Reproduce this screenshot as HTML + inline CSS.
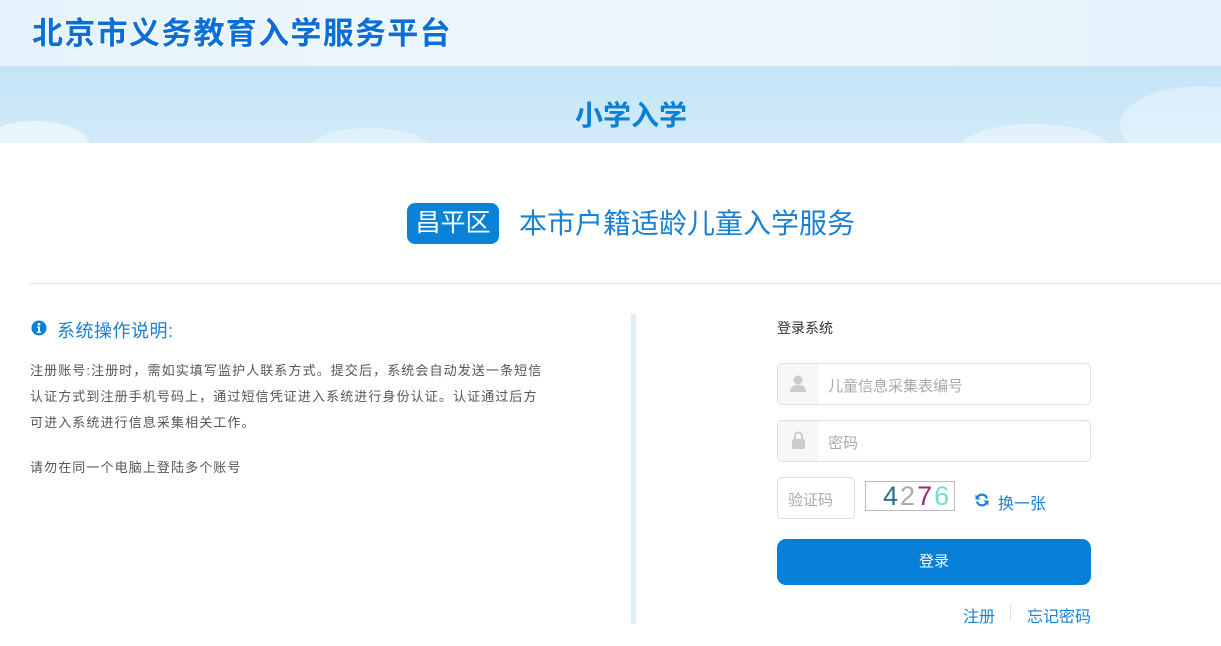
<!DOCTYPE html>
<html><head><meta charset="utf-8">
<style>
*{margin:0;padding:0;box-sizing:border-box}
body{width:1221px;height:646px;overflow:hidden;background:#fff;font-family:"Liberation Sans","Noto Sans CJK SC",sans-serif;position:relative}
.a{position:absolute;white-space:nowrap}
.top{left:0;top:0;width:1221px;height:66px;background:linear-gradient(90deg,#e6f3fc,#eef7fd 60%,#e4f2fc)}
.band{left:0;top:66px;width:1221px;height:77px;background:linear-gradient(180deg,#c4e4f7,#d2ebf9);overflow:hidden}
.cloud{position:absolute;background:#eef7fd;border-radius:50%;opacity:.8}
.logo{left:32px;top:8px;font-size:31px;font-weight:bold;color:#0a6fd6;letter-spacing:1.3px;text-shadow:0 0 2px #fff,1px 1px 0 #fff,-1px -1px 0 #fff,1px -1px 0 #fff,-1px 1px 0 #fff}
.inp{position:absolute;border:1px solid #ddd;border-radius:5px;background:#fff;overflow:hidden}
.ic{position:absolute;left:0;top:0;width:40px;height:100%;background:#f7f7f7}
.ph{position:absolute;font-size:15px;color:#aaa}
</style></head><body>
<div class="a top"></div>
<div class="a band">
<div class="cloud" style="left:-20px;top:55px;width:110px;height:50px"></div>
<div class="cloud" style="left:310px;top:62px;width:120px;height:40px;opacity:.5"></div>
<div class="cloud" style="left:960px;top:58px;width:150px;height:50px;opacity:.6"></div>
<div class="cloud" style="left:1120px;top:20px;width:160px;height:80px;opacity:.5"></div>
</div>
<div class="a logo">北京市义务教育入学服务平台</div>
<div class="a" style="left:575px;top:94px;font-size:28px;font-weight:bold;color:#0a7fd8">小学入学</div>

<div class="a" style="left:407px;top:203px;width:92px;height:41px;background:#0a82d8;border-radius:8px;color:#fff;font-size:25px;text-align:center;line-height:41px">昌平区</div>
<div class="a" style="left:519px;top:205px;font-size:28px;color:#1a80d4;line-height:38px">本市户籍适龄儿童入学服务</div>
<div class="a" style="left:30px;top:283px;width:1191px;height:1px;background:#ddd"></div>

<svg class="a" style="left:31px;top:320px" width="16" height="16" viewBox="0 0 16 16"><circle cx="8" cy="8" r="7.5" fill="#0a7fd8"/><circle cx="8" cy="4.3" r="1.4" fill="#fff"/><path d="M6 6.6h3v5h1.2v1.3H5.8v-1.3H7v-3.7H6z" fill="#fff"/></svg>
<div class="a" style="left:57px;top:317px;font-size:18px;color:#1a80d4;letter-spacing:0.5px">系统操作说明:</div>
<div class="a" style="left:30px;top:358px;font-size:13px;color:#555;line-height:26px;letter-spacing:1.1px">注册账号:注册时，需如实填写监护人联系方式。提交后，系统会自动发送一条短信<br>认证方式到注册手机号码上，通过短信凭证进入系统进行身份认证。认证通过后方<br>可进入系统进行信息采集相关工作。</div>
<div class="a" style="left:30px;top:457px;font-size:13px;color:#555;letter-spacing:1.1px">请勿在同一个电脑上登陆多个账号</div>
<div class="a" style="left:631px;top:314px;width:5px;height:310px;background:#e2eef8"></div>

<div class="a" style="left:777px;top:318px;font-size:14px;color:#333">登录系统</div>
<div class="inp" style="left:777px;top:363px;width:314px;height:42px"><div class="ic"><svg style="position:absolute;left:12px;top:11px" width="16" height="18" viewBox="0 0 16 18"><circle cx="8" cy="5" r="4.5" fill="#ccc"/><path d="M0 17c0-5 3-7 8-7s8 2 8 7z" fill="#ccc"/></svg></div><div class="ph" style="left:50px;top:11px">儿童信息采集表编号</div></div>
<div class="inp" style="left:777px;top:420px;width:314px;height:42px"><div class="ic"><svg style="position:absolute;left:14px;top:10px" width="13" height="18" viewBox="0 0 13 18"><path d="M3 8V5a3.5 3.5 0 0 1 7 0v3" stroke="#ccc" stroke-width="2" fill="none"/><rect x="0" y="8" width="13" height="10" rx="2" fill="#ccc"/></svg></div><div class="ph" style="left:50px;top:11px">密码</div></div>
<div class="inp" style="left:777px;top:477px;width:78px;height:42px"><div class="ph" style="left:10px;top:11px">验证码</div></div>
<div class="a" style="left:865px;top:481px;width:90px;height:30px;border:1px solid #bbb;background:#fff;font-size:27px;line-height:28px;padding-left:17px;letter-spacing:2px"><span style="color:#2a6f8a">4</span><span style="color:#aaa">2</span><span style="color:#9a2a7a">7</span><span style="color:#6fe0d0">6</span></div>
<svg class="a" style="left:975px;top:493px" width="14" height="14" viewBox="0 0 14 14"><path d="M12 5.5A5.2 5.2 0 0 0 2.5 4.2" stroke="#1a80d4" stroke-width="2.2" fill="none"/><path d="M0.5 1.5v5h5z" fill="#1a80d4"/><path d="M2 8.5a5.2 5.2 0 0 0 9.5 1.3" stroke="#1a80d4" stroke-width="2.2" fill="none"/><path d="M13.5 12.5v-5h-5z" fill="#1a80d4"/></svg>
<div class="a" style="left:998px;top:490px;font-size:16px;color:#1a80d4">换一张</div>
<div class="a" style="left:777px;top:539px;width:314px;height:46px;background:#0580d6;border-radius:9px;color:#fff;font-size:15px;text-align:center;line-height:46px">登录</div>
<div class="a" style="left:963px;top:603px;font-size:16px;color:#1a80d4">注册</div>
<div class="a" style="left:1010px;top:605px;width:1px;height:16px;background:#ddd"></div>
<div class="a" style="left:1027px;top:603px;font-size:16px;color:#1a80d4">忘记密码</div>
</body></html>
